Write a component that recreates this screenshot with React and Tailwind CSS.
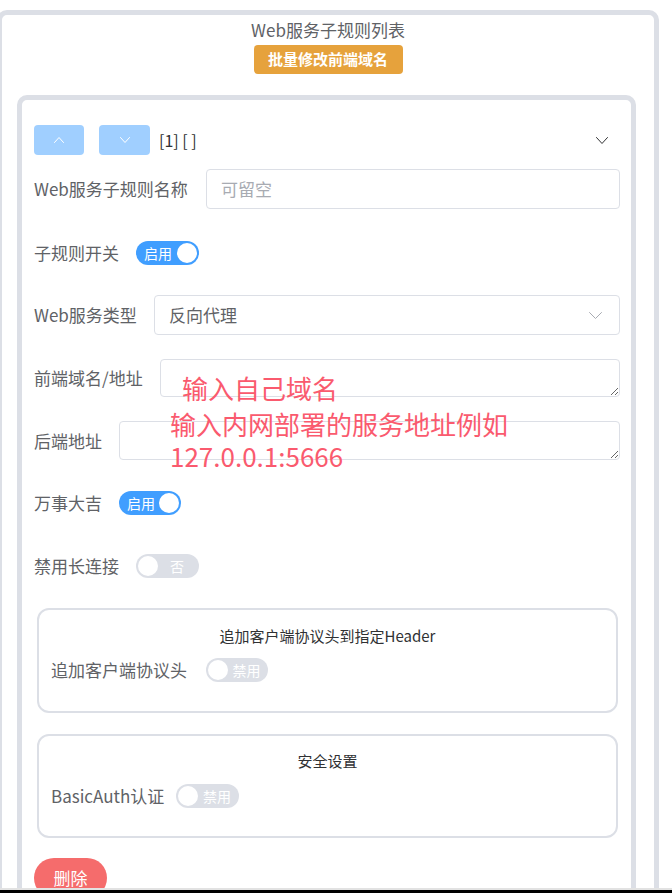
import React from "react";

function Chevron({ dir = "down", className = "", color = "white", w = 10, h = 6, sw = 1 }) {
  const d = dir === "down" ? `M0.5 0.5 L${w / 2} ${h - 0.5} L${w - 0.5} 0.5` : `M0.5 ${h - 0.5} L${w / 2} 0.5 L${w - 0.5} ${h - 0.5}`;
  return (
    <svg width={w} height={h} viewBox={`0 0 ${w} ${h}`} className={className}>
      <path d={d} fill="none" stroke={color} strokeWidth={sw} strokeLinecap="round" strokeLinejoin="round" />
    </svg>
  );
}

function Switch({ on, text, w = "w-[63px]" }) {
  if (on) {
    return (
      <div className={`flex h-[24px] ${w} shrink-0 items-center justify-between rounded-full bg-[#409eff] pl-[8px] pr-[2px]`}>
        <span className="text-[14px] leading-none text-white">{text}</span>
        <span className="h-[20px] w-[20px] rounded-full bg-white" />
      </div>
    );
  }
  return (
    <div className={`flex h-[24px] ${w} shrink-0 items-center rounded-full bg-[#dcdfe6] pl-[2px] pr-[3px]`}>
      <span className="h-[20px] w-[20px] rounded-full bg-white" />
      <span className="flex-1 text-center text-[14px] leading-none text-white">{text}</span>
    </div>
  );
}

function Label({ w, children }) {
  return <div className={`${w} shrink-0 text-[17px] leading-[24px] text-[#606266]`}>{children}</div>;
}

export default function App() {
  return (
    <div className="relative flex h-[893px] w-[672px] flex-col overflow-hidden bg-white font-['Noto_Sans_CJK_SC',sans-serif]">
      <div className="flex-1 overflow-hidden">
        <div className="ml-[-3px] mt-[10px] w-[662px] rounded-[10px] border-[5px] border-[#dcdfe6] pt-[4px]">
          <div className="flex flex-col items-center">
            <div className="text-[17px] leading-[22px] text-[#606266]">Web服务子规则列表</div>
            <div className="mt-[4px] flex h-[29px] w-[149px] items-center justify-center rounded-[4px] bg-[#e6a23c] text-[15px] font-bold text-white">
              批量修改前端域名
            </div>
          </div>

          <div className="ml-[15px] mt-[21px] w-[619px] rounded-[10px] border-[5px] border-[#dcdfe6] pl-[12px] pr-[11px] pt-[25px] pb-[40px]">
            {/* header */}
            <div className="flex h-[30px] items-center">
              <div className="flex h-[30px] w-[50px] items-center justify-center rounded-[4px] bg-[#a0cfff]">
                <Chevron dir="up" />
              </div>
              <div className="ml-[15px] flex h-[30px] w-[51px] items-center justify-center rounded-[4px] bg-[#a0cfff]">
                <Chevron dir="down" />
              </div>
              <div className="ml-[9px] text-[16px] text-[#303133]">[1] [ ]</div>
              <div className="flex-1" />
              <Chevron dir="down" color="#303133" w={12} h={7} className="mr-[12px]" />
            </div>

            {/* name */}
            <div className="mt-[14px] flex h-[40px] items-center">
              <Label w="w-[172px]">Web服务子规则名称</Label>
              <div className="flex h-[40px] flex-1 items-center rounded-[4px] border border-[#dcdfe6] px-[14px] text-[17px] text-[#a8abb2]">
                可留空
              </div>
            </div>

            {/* switch */}
            <div className="mt-[24px] flex h-[40px] items-center">
              <Label w="w-[102px]">子规则开关</Label>
              <Switch on text="启用" />
            </div>

            {/* select */}
            <div className="mt-[22px] flex h-[40px] items-center">
              <Label w="w-[120px]">Web服务类型</Label>
              <div className="flex h-[40px] flex-1 items-center justify-between rounded-[4px] border border-[#dcdfe6] pl-[14px] pr-[17px] text-[17px] text-[#606266]">
                <span>反向代理</span>
                <Chevron dir="down" color="#a8abb2" w={13} h={7} />
              </div>
            </div>

            {/* frontend */}
            <div className="mt-[24px] flex h-[38px] items-center">
              <Label w="w-[126px]">前端域名/地址</Label>
              <textarea rows={1} className="h-[38px] flex-1 resize-y rounded-[4px] border border-[#dcdfe6] bg-white outline-none" />
            </div>

            {/* backend */}
            <div className="mt-[24px] flex h-[39px] items-center">
              <Label w="w-[85px]">后端地址</Label>
              <textarea rows={1} className="h-[39px] flex-1 resize-y rounded-[4px] border border-[#dcdfe6] bg-white outline-none" />
            </div>

            {/* wanshi */}
            <div className="mt-[23px] flex h-[40px] items-center">
              <Label w="w-[85px]">万事大吉</Label>
              <Switch on text="启用" w="w-[62px]" />
            </div>

            {/* keepalive */}
            <div className="mt-[23px] flex h-[40px] items-center">
              <Label w="w-[102px]">禁用长连接</Label>
              <Switch text="否" />
            </div>

            {/* box1 */}
            <div className="ml-[3px] mt-[22px] h-[105px] w-[581px] rounded-[12px] border-2 border-[#dcdfe6] px-[12px] pt-[15px]">
              <div className="text-center text-[15px] leading-[22px] text-[#303133]">追加客户端协议头到指定Header</div>
              <div className="mt-[11px] flex h-[24px] items-center">
                <Label w="w-[155px]">追加客户端协议头</Label>
                <Switch text="禁用" w="w-[62px]" />
              </div>
            </div>

            {/* box2 */}
            <div className="ml-[3px] mt-[21px] h-[104px] w-[581px] rounded-[12px] border-2 border-[#dcdfe6] px-[12px] pt-[14px]">
              <div className="text-center text-[15px] leading-[22px] text-[#303133]">安全设置</div>
              <div className="mt-[11px] flex h-[25px] items-center">
                <Label w="w-[125px]">BasicAuth认证</Label>
                <Switch text="禁用" />
              </div>
            </div>

            {/* delete */}
            <div className="mt-[20px] flex h-[40px] w-[73px] items-center justify-center rounded-full bg-[#f56c6c] text-[17px] text-white">
              删除
            </div>
          </div>
        </div>
      </div>
      <div className="h-[2px] shrink-0 bg-[#e2e2e2]" />
      <div className="h-[3px] shrink-0 bg-black" />

      {/* annotation overlay */}
      <div className="absolute left-[182px] top-[372px] text-[26px] leading-[32px] text-[#fa5a6e]">输入自己域名</div>
      <div className="absolute left-[170px] top-[408px] text-[26px] leading-[32px] text-[#fa5a6e]">
        <div>输入内网部署的服务地址例如</div>
        <div>127.0.0.1:5666</div>
      </div>
    </div>
  );
}
